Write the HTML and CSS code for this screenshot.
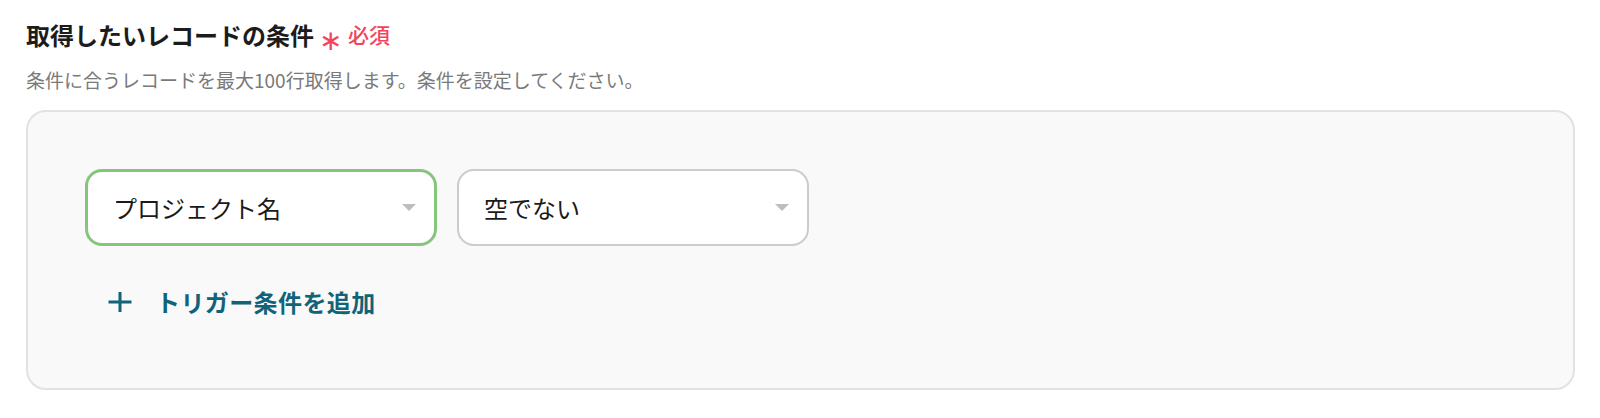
FILE: index.html
```html
<!DOCTYPE html>
<html lang="ja">
<head>
<meta charset="utf-8">
<link rel="stylesheet" href="styles.css">
</head>
<body>
<div class="field">
  <div class="label-row">
    <span class="label">取得したいレコードの条件</span>
    <span class="req-mark">∗</span>
    <span class="req">必須</span>
  </div>
  <p class="desc">条件に合うレコードを最大100行取得します。条件を設定してください。</p>
  <div class="panel">
    <div class="cond-row">
      <div class="select active">
        <span class="select-text">プロジェクト名</span>
        <span class="caret"></span>
      </div>
      <div class="select">
        <span class="select-text">空でない</span>
        <span class="caret"></span>
      </div>
    </div>
    <button class="add-btn" type="button">
      <svg class="plus" width="24" height="24" viewBox="0 0 24 24"><path d="M12 2V22M0.5 12H23.5" stroke="currentColor" stroke-width="3" fill="none"/></svg>
      <span>トリガー条件を追加</span>
    </button>
  </div>
</div>
</body>
</html>
```

FILE: styles.css
```css
* { box-sizing: border-box; }
html, body { margin: 0; padding: 0; background: #ffffff; }
body {
  font-family: "Noto Sans CJK JP", "Noto Sans", sans-serif;
  color: #1a1a1a;
}
.field {
  padding: 16px 25px 0 26px;
}
.label-row {
  display: flex;
  align-items: center;
  height: 36px;
}
.label {
  font-size: 24px;
  font-weight: 700;
  color: #1c1c1c;
}
.req-mark {
  color: #f2455c;
  font-size: 28px;
  font-weight: 500;
  margin-left: 5px;
  position: relative;
  top: 4px;
}
.req {
  color: #f2455c;
  font-size: 21px;
  font-weight: 500;
  margin-left: 6px;
}
.desc {
  margin: 15px 0 0 0;
  font-size: 19px;
  line-height: 26px;
  color: #7a7a7a;
}
.panel {
  margin-top: 17px;
  width: 1549px;
  height: 280px;
  border: 2px solid #e2e2e6;
  border-radius: 20px;
  background: #f9f9f9;
  padding: 57px 57px 0 57px;
}
.cond-row {
  display: flex;
  gap: 20px;
}
.select {
  width: 352px;
  height: 77px;
  background: #ffffff;
  border: 2px solid #cccccc;
  border-radius: 17px;
  display: flex;
  align-items: center;
  padding: 0 18px 0 25px;
}
.select.active {
  border: 3px solid #86c57c;
}
.select-text {
  flex: 1;
  font-size: 24px;
  color: #1a1a1a;
}
.caret {
  width: 0;
  height: 0;
  border-left: 7px solid transparent;
  border-right: 7px solid transparent;
  border-top: 7px solid #bdbdbd;
}
.add-btn {
  margin-top: 38px;
  margin-left: 23px;
  display: flex;
  align-items: center;
  gap: 24px;
  background: none;
  border: 0;
  padding: 0;
  font-family: inherit;
  font-size: 24px;
  letter-spacing: 0.4px;
  font-weight: 700;
  color: #12637a;
  cursor: pointer;
}
.plus { display: block; }
```
